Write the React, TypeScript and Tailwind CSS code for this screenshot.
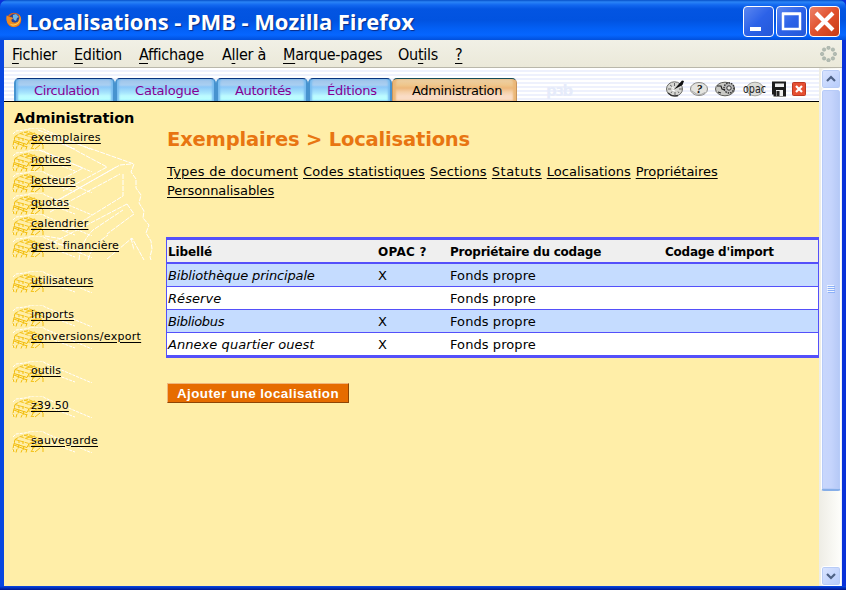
import type { ReactNode } from 'react';

const menu: [string, string, string, string][] = [
  ['', 'F', 'ichier', 'w-[62px]'],
  ['', 'E', 'dition', 'w-[65px]'],
  ['', 'A', 'ffichage', 'w-[83px]'],
  ['A', 'l', 'ler à', 'w-[61px]'],
  ['', 'M', 'arque-pages', 'w-[115px]'],
  ['Ou', 't', 'ils', 'w-[57px]'],
  ['', '?', '', 'w-[12px]'],
];

const tabs: [string, string, string][] = [
  ['Circulation', 'w-[101px] pl-[18px]', 'tracking-[-0.4px]'],
  ['Catalogue', 'w-[101px] pl-[18px]', 'tracking-[-0.2px]'],
  ['Autorités', 'w-[92px] pl-[17px]', 'tracking-[-0.3px]'],
  ['Éditions', 'w-[84px] pl-[17px]', 'tracking-[-0.25px]'],
];

const sections: [string, string][][] = [
  [
    ['exemplaires', 'tracking-[0.27px]'],
    ['notices', 'tracking-[0.05px]'],
    ['lecteurs', 'tracking-[0.05px]'],
    ['quotas', 'tracking-[0.1px]'],
    ['calendrier', 'tracking-[0.2px]'],
    ['gest. financière', 'tracking-[0.17px]'],
  ],
  [['utilisateurs', 'tracking-[0.1px]']],
  [['imports', 'tracking-[0.15px]'], ['conversions/export', 'tracking-[0.28px]']],
  [['outils', 'tracking-[0px]']],
  [['z39.50', 'tracking-[0.1px]']],
  [['sauvegarde', 'tracking-[0.25px]']],
];

const links: [string, string][] = [
  ['Types de document', 'mr-[5px] tracking-[0.25px]'],
  ['Codes statistiques', 'mr-[5px] tracking-[0.14px]'],
  ['Sections', 'mr-[5px] tracking-[0.22px]'],
  ['Statuts', 'mr-[5px] tracking-[0.48px]'],
  ['Localisations', 'mr-[5px] tracking-[0.02px]'],
  ['Propriétaires', 'tracking-[-0.03px]'],
  ['Personnalisables', 'tracking-[-0.08px]'],
];

const rows: [string, string, string, string][] = [
  ['Bibliothèque principale', 'tracking-[-0.14px]', 'X', 'Fonds propre'],
  ['Réserve', 'tracking-[0.05px]', '', 'Fonds propre'],
  ['Bibliobus', 'tracking-[-0.35px]', 'X', 'Fonds propre'],
  ['Annexe quartier ouest', 'tracking-[0.06px]', 'X', 'Fonds propre'],
];

function Firefox() {
  return (
    <svg width="16" height="16" viewBox="0 0 16 16">
      <circle cx="8" cy="8" r="7.3" fill="#d5601c" />
      <circle cx="8.4" cy="7" r="5.2" fill="#26449a" />
      <path d="M7 3l3-1 3 3-2 1-1 3-2-1-1-2z" fill="#6bb5e5" />
      <path d="M.8 3.2L3 5l3 .2 1.2 1.4-2 1.2.8 2.2 3 .8 3-1.4 1.4-3.6-.6-3.2c2.4 2 3 5.300 1.200 8.400C12.200 14.500 8 16 4.500 14 .8 12-.5 7.200.8 3.200z" fill="#ee8b22" />
      <path d="M14 5c1 4-1.500 8-6 8.400-2 .2-3.500-.7-4.500-2 2.500 1.400 6 1.400 8-.4C13.300 9.500 14 7.500 14 5z" fill="#ffd55a" />
    </svg>
  );
}

function Throbber() {
  const dots = [[8, 1.8], [12.4, 3.6], [14.4, 8], [12.4, 12.4], [8, 14.2], [3.6, 12.4], [1.6, 8], [3.6, 3.6]];
  return (
    <svg width="17" height="16" viewBox="0 0 16 16">
      {dots.map(([x, y]) => <circle key={`${x}-${y}`} cx={x} cy={y} r="1.7" fill="#b3bcb2" stroke="#9eaaa2" strokeWidth=".6" />)}
    </svg>
  );
}

function WindowButton({ red, children }: { red?: boolean; children: ReactNode }) {
  return (
    <div className={`h-[31px] w-[31px] rounded-[4px] border border-white ${red ? 'bg-linear-to-br from-[#ec8066] via-[#e0502c] to-[#c83c14]' : 'bg-linear-to-br from-[#5b86f0] via-[#2c62e8] to-[#2458d8]'}`}>
      <svg width="29" height="29" viewBox="0 0 29 29" fill="none">{children}</svg>
    </div>
  );
}

function Books() {
  return (
    <svg className="absolute left-[-1px] top-0" width="84" height="22" viewBox="0 0 84 22" fill="none">
      <path d="M1 6l3-3 9-1 8-2h9l3 2 47 20M31 9l32 12M1 11l2 3M1 20l1-5" stroke="#fff" strokeDasharray="3 1" />
      <path d="M3 8.500l5-3 8-2 14 5M8 5.500l12 4M3 8.500l14 4 9-4M17 12.500v3.500l8-3" stroke="#f4c41f" strokeDasharray="4 1" />
      <path d="M3 8.500l-1 4 13 4 2-4M7 9v3M11 10v3M2 12.500l-1 5M2 14l13 5M7 13.500l-1 4M12 15l-1 4M1 18l1 3M5 18l-1 3.500M10 19l-1 2.500M15 18l-1 3.500" stroke="#f2bd0c" />
      <path d="M18 13l8-4 5 3M19 21l4-7h7M28 14l3 3v4M28 17l-5 4M20 17l5-2" stroke="#f2bd0c" />
      <path d="M14 7l9-2M12 4l9 3M19 20.500h3" stroke="#f4c41f" />
    </svg>
  );
}

function Building() {
  return (
    <svg className="absolute left-0 top-0" width="145" height="132" viewBox="0 0 145 132" fill="none" stroke="#fff" strokeDasharray="5 1">
      <path d="M25 2L121 36l-3 8 5 7v9l5 7-2 8 5 8-1 7 6 7-3 8 5 8 1 8-2 8 3 9" />
      <path d="M36 8l58 31-44 24M26 22l44 18-28 15M118 36l-11 1-64 36M103 39l-61 35" />
      <path d="M110 46v22l-58 36M37 84l70-38M114 76l-73 38M114 76l7 10-27 20" />
      <path d="M66 132c1-14 8-24 14-30l30-20M75 132c3-12 10-18 20-25M94 131l25-21 12 22M118 110l3 12M32 108l18 3v6l-12-2" />
    </svg>
  );
}

function Toolbar() {
  return (
    <div className="flex items-center">
      <svg width="140" height="20" viewBox="0 0 140 20" fill="none">
        <g>
          <ellipse cx="8.500" cy="11" rx="8" ry="7.200" fill="#d6d6d2" stroke="#6c6c68" />
          <path d="M2 15q4 4 10 2.500" stroke="#333" strokeWidth="1.300" />
          <path d="M8.500 5v3M9 14v3M2 11h3M13 11h3M4 7l2 1.500M5 15l1-1.500M13 15l-1-1.500" stroke="#666" />
          <path d="M8 11.500L16 2.500l2 .5-1.500 4z" fill="#111" />
          <path d="M6 9.500l2 1M6 12l3 1" stroke="#fff" />
        </g>
        <g>
          <ellipse cx="33" cy="11" rx="8.500" ry="6.500" fill="#e4e4e0" stroke="#8a8a86" />
          <path d="M26 13q4 4 9 3.500l4-2" stroke="#aaa" />
          <text x="30.500" y="15" fill="#111" fontSize="12" fontStyle="italic" fontWeight="bold" fontFamily="Liberation Serif, serif">?</text>
        </g>
        <g>
          <ellipse cx="59" cy="11" rx="9.500" ry="6.800" fill="#c9c9c4" stroke="#5e5e59" />
          <circle cx="63" cy="10" r="5" fill="#bbb" stroke="#333" strokeWidth="1.500" strokeDasharray="1.500 1" />
          <circle cx="63" cy="10" r="2.200" fill="#e4e4e0" stroke="#333" />
          <path d="M51 8h4l1 3 3 1M52 14l3 1" stroke="#222" strokeWidth="1.200" />
        </g>
        <g>
          <ellipse cx="89" cy="11" rx="8.500" ry="6.800" fill="#ddddd8" stroke="#a3a39d" />
          <text x="77" y="15" fill="#222" fontSize="13" textLength="23" lengthAdjust="spacingAndGlyphs" fontFamily="DejaVu Sans, sans-serif">opac</text>
        </g>
        <g>
          <path d="M106 3.500h14v15h-12.500v-2H106z" fill="#1b1b1b" />
          <path d="M109 5.500h9v3.500h-9zM110 12h7v6h-7z" fill="#ececec" />
          <path d="M110.500 13h3v5h-3z" fill="#222" />
        </g>
        <g>
          <rect x="126.500" y="4.500" width="13" height="13" rx="1" fill="#e54f32" stroke="#bd3822" />
          <path d="M130 8l6 6M136 8l-6 6" stroke="#fff" strokeWidth="2.200" />
        </g>
      </svg>
    </div>
  );
}

function ArrowButton({ down }: { down?: boolean }) {
  return (
    <div className="flex h-[20px] w-[20px] shrink-0 items-center justify-center rounded-[3px] border border-white bg-linear-to-br from-[#dbe5ff] to-[#b5cbfb] shadow-[inset_0_0_0_1px_#b8ccf5]">
      <svg width="10" height="8" viewBox="0 0 10 8" fill="none">
        <path d={down ? 'M1 2l4 4 4-4' : 'M1 6l4-4 4 4'} stroke="#4d6185" strokeWidth="2.200" />
      </svg>
    </div>
  );
}

export default function App() {
  return (
    <div className="flex h-[590px] w-[846px] flex-col overflow-hidden bg-[#0831d9] text-black [font-family:'DejaVu_Sans',sans-serif]">
      <header className="flex h-[40px] shrink-0 items-center rounded-t-[7px] bg-[linear-gradient(180deg,#0650c8_0px,#2a84f6_2px,#1268f0_5px,#0355e2_9px,#0153e0_20px,#0360f6_29px,#0666ff_35px,#0150dc_40px)] pl-[6px] pr-[6px] pt-[3px]">
        <div className="-mt-[3px]"><Firefox /></div>
        <h1 className="-mt-px ml-[4px] grow whitespace-nowrap text-[22px] font-bold leading-[30px] tracking-[-0.08px] text-white [font-family:'Open_Sans',sans-serif] [text-shadow:1px_1px_1px_#0b2b84]">Localisations - PMB - Mozilla Firefox</h1>
        <div className="flex gap-[2px]">
          <WindowButton><path d="M6 22h11" stroke="#fff" strokeWidth="4" /></WindowButton>
          <WindowButton><path d="M6 7h17v15H6zM5 6.500h19" stroke="#fff" strokeWidth="2.500" /></WindowButton>
          <WindowButton red><path d="M6 6l17 17M23 6L6 23" stroke="#fff" strokeWidth="4" /></WindowButton>
        </div>
      </header>

      <div className="flex h-[546px] flex-col border-x-4 border-l-[#0847e0] border-r-[#0831d9]">
        <nav className="flex h-[28px] shrink-0 items-center border-b border-[#b9b7aa] bg-linear-to-b from-[#f1f0e6] to-[#ebe9d9] pl-[8px] pr-[5px] text-[16px] [font-family:'DejaVu_Sans_Condensed','DejaVu_Sans',sans-serif]">
          {menu.map(([before, key, after, width]) => (
            <span key={before + key + after} className={`${width} shrink-0 whitespace-nowrap pt-[2px] tracking-[-0.28px]`}>
              {before}<u className="underline decoration-1 underline-offset-[3px]">{key}</u>{after}
            </span>
          ))}
          <span className="ml-auto"><Throbber /></span>
        </nav>

        <div className="flex h-[518px]">
          <main className="flex w-[815px] shrink-0 flex-col bg-[#ffeea8]">
            <div className="flex h-[34px] shrink-0 items-end border-b border-black bg-[repeating-linear-gradient(180deg,#fff_0px,#fff_2px,#eef1fd_2px,#eef1fd_4px)] pl-[10px]">
              {tabs.map(([name, size, track]) => (
                <div key={name} className={`${size} ${track} h-[23px] rounded-t-[5px] border-x-2 border-t border-x-[#4793cf] border-t-[#08357f] bg-[linear-gradient(180deg,#9fc3e7_0px,#a9cff2_6px,#8bc7f8_8px,#a8e6fd_14px,#bcfaff_17px,#b9ffff_21px)] text-[13px] leading-[23px] text-[#850091] shadow-[inset_2px_0_2px_#78bcf0,inset_-2px_0_2px_#78bcf0]`}>{name}</div>
              ))}
              <div className="h-[23px] w-[125px] rounded-t-[5px] border-x border-t border-x-[#c8945c] border-t-[#174c58] bg-[linear-gradient(180deg,#ebd0a7_0px,#efc78c_6px,#edb77b_9px,#f5d0a8_13px,#fadcc5_17px)] pl-[19px] text-[13px] leading-[23px] tracking-[-0.36px] shadow-[inset_3px_0_2px_#ebb777,inset_-3px_0_2px_#ebb777]">Administration</div>
              <span className="ml-[29px] text-[15px] font-bold leading-[20px] tracking-[-1.2px] text-[#e6ebfa]">pɜb</span>
              <div className="ml-auto mr-[13px] pb-[3px]"><Toolbar /></div>
            </div>

            <div className="flex grow">
              <aside className="w-[162px] shrink-0 pl-[9px] pt-[6px]">
                <h2 className="pl-px text-[14.500px] font-bold leading-[20px] tracking-[-0.100px]">Administration</h2>
                {sections.map((items, group) => (
                  <ul key={items[0][0]} className="relative mb-[13px]">
                    {group === 0 && <Building />}
                    {items.map(([item, track]) => (
                      <li key={item} className="relative h-[21.600px] pl-[18px] text-[11px] leading-[19px]">
                        <Books />
                        <a className={`${track} relative whitespace-nowrap underline decoration-1 underline-offset-2`}>{item}</a>
                      </li>
                    ))}
                  </ul>
                ))}
              </aside>

              <section className="w-[653px] shrink-0">
                <h2 className="ml-px mt-[26px] text-[19.500px] font-bold leading-[24px] tracking-[-0.18px] text-[#e87511]">Exemplaires &gt; Localisations</h2>
                <div className="ml-px mt-[10px] flex w-[600px] flex-wrap text-[13px] leading-[19px]">
                  {links.map(([name, track]) => (
                    <a key={name} className={`${track} whitespace-nowrap underline decoration-1 underline-offset-2`}>{name}</a>
                  ))}
                </div>
                <table className="mt-[37px] w-[653px] table-fixed border-separate border-spacing-0 border-x border-b-[3px] border-t-[3px] border-[#5450fa] bg-white text-left text-[13px]">
                  <colgroup><col className="w-[210px]" /><col className="w-[72px]" /><col className="w-[215px]" /><col /></colgroup>
                  <thead>
                    <tr className="h-[24px] bg-[#efefef]">
                      {['Libellé', 'OPAC ?', 'Propriétaire du codage', "Codage d'import"].map((name) => (
                        <th key={name} className={`${name === 'OPAC ?' ? 'tracking-[0.25px]' : name === 'Libellé' ? 'tracking-[-0.1px]' : 'tracking-[-0.22px]'} whitespace-nowrap border-b-2 border-[#5450fa] p-0 pl-px pt-[2px] text-[12px] font-bold leading-[20px]`}>{name}</th>
                      ))}
                    </tr>
                  </thead>
                  <tbody>
                    {rows.map(([name, track, opac, owner], i) => {
                      const line = i < 3 ? 'h-[23px] border-b border-[#5450fa]' : 'h-[22px]';
                      return (
                        <tr key={name} className={i % 2 ? 'bg-white' : 'bg-[#c5dcff]'}>
                          <td className={`${line} ${track} p-0 pl-px pt-[2px] italic leading-[20px]`}>{name}</td>
                          <td className={`${line} p-0 pl-px pt-[2px] leading-[20px]`}>{opac}</td>
                          <td className={`${line} p-0 pl-px pt-[2px] leading-[20px] tracking-[0.08px]`}>{owner}</td>
                          <td className={`${line} p-0`} />
                        </tr>
                      );
                    })}
                  </tbody>
                </table>
                <button className="ml-px mt-[25px] block h-[20px] w-[182px] whitespace-nowrap border border-b-[#8d4506] border-l-[#efb77c] border-r-[#8d4506] border-t-[#efb77c] bg-[#e66c00] text-[13.330px] font-bold leading-[19px] tracking-[0.46px] text-white [font-family:'Liberation_Sans',sans-serif]">Ajouter une localisation</button>
              </section>
            </div>
          </main>

          <div className="flex w-[23px] shrink-0 flex-col border-r border-[#e8eefc] bg-linear-to-r from-[#eeede5] to-[#fefefb] pl-[2px] pt-px">
            <ArrowButton />
            <div className="flex h-[402px] w-[20px] items-center justify-center rounded-[3px] border border-b-2 border-white border-b-[#86aee8] bg-linear-to-r from-[#c9d7fc] via-[#c5d4fc] to-[#b4c8f6] shadow-[inset_0_0_0_1px_#b7cbf8]">
              <div className="flex h-[8px] w-[7px] flex-col justify-between">
                {[0, 1, 2, 3].map((n) => <div key={n} className="h-px bg-[#8cb0f8] shadow-[-1px_-1px_0_#eef4fe]" />)}
              </div>
            </div>
            <div className="mt-auto"><ArrowButton down /></div>
          </div>
        </div>
      </div>
      <footer className="h-[4px] bg-linear-to-b from-[#0848e8] to-[#00148c]" />
    </div>
  );
}
